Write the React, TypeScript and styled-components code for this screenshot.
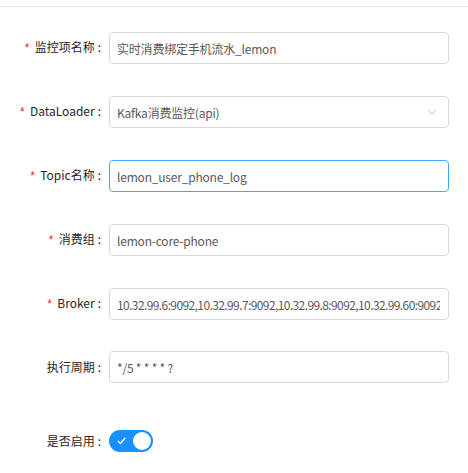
import React from "react";
import styled, { createGlobalStyle } from "styled-components";

const GlobalStyle = createGlobalStyle`
  html, body { margin: 0; padding: 0; background: #fff; }
  body { font-family: "Noto Sans CJK SC", "Noto Sans", sans-serif; font-size: 12px; }
`;

const Page = styled.div`
  width: 468px;
  height: 473px;
  overflow: hidden;
  background: #fff;
`;

const TopBar = styled.div`
  height: 6px;
  border-bottom: 1px solid #e8e8e8;
`;

const Form = styled.div`
  padding-top: 24px;
  display: flex;
  flex-direction: column;
`;

const Row = styled.div<{ $extraTop?: number }>`
  display: grid;
  grid-template-columns: 101px 340px;
  column-gap: 8px;
  align-items: center;
  height: 32px;
  margin-bottom: 32px;
  margin-top: ${(p) => p.$extraTop || 0}px;
`;

const Label = styled.label`
  text-align: right;
  color: #262626;
  font-size: 12px;
  white-space: nowrap;
  line-height: 32px;
`;

const Colon = styled.span`
  margin-left: 3px;
`;

const Star = styled.span`
  color: #f5222d;
  margin-right: 4px;
  font-family: "Liberation Mono", monospace;
  font-size: 12px;
`;

const Input = styled.div<{ $focused?: boolean }>`
  box-sizing: border-box;
  height: 32px;
  border: 1px solid ${(p) => (p.$focused ? "#40a9ff" : "#d9d9d9")};
  border-radius: 4px;
  padding: 0 8px 0 7px;
  display: flex;
  align-items: center;
  color: #595959;
  font-size: 12px;
  white-space: nowrap;
  overflow: hidden;
  position: relative;
`;

const Value = styled.span<{ $tight?: boolean }>`
  flex: 1;
  overflow: hidden;
  letter-spacing: ${(p) => (p.$tight ? "-0.6px" : "-0.2px")};
`;

const Arrow = styled.svg`
  position: absolute;
  right: 12px;
  top: 13px;
`;

const SwitchTrack = styled.div`
  width: 44px;
  height: 22px;
  border-radius: 11px;
  background: #1890ff;
  position: relative;
`;

const Knob = styled.div`
  position: absolute;
  top: 2px;
  right: 2px;
  width: 18px;
  height: 18px;
  border-radius: 50%;
  background: #fff;
`;

const Check = styled.svg`
  position: absolute;
  left: 8px;
  top: 7px;
`;

type Field = {
  label: string;
  required?: boolean;
  value: string;
  focused?: boolean;
  select?: boolean;
  tight?: boolean;
};

const fields: Field[] = [
  { label: "监控项名称", required: true, value: "实时消费绑定手机流水_lemon" },
  { label: "DataLoader", required: true, value: "Kafka消费监控(api)", select: true },
  { label: "Topic名称", required: true, value: "lemon_user_phone_log", focused: true },
  { label: "消费组", required: true, value: "lemon-core-phone" },
  {
    label: "Broker",
    required: true,
    value: "10.32.99.6:9092,10.32.99.7:9092,10.32.99.8:9092,10.32.99.60:9092",
    tight: true,
  },
  { label: "执行周期", value: "*/5 * * * * ?" },
];

export default function App() {
  return (
    <Page>
      <GlobalStyle />
      <TopBar />
      <Form>
        {fields.map((f) => (
          <Row key={f.label}>
            <Label>
              {f.required && <Star>*</Star>}
              {f.label}
              <Colon>:</Colon>
            </Label>
            <Input $focused={f.focused}>
              <Value $tight={f.tight}>{f.value}</Value>
              {f.select && (
                <Arrow width="8" height="5" viewBox="0 0 8 5">
                  <path d="M0.5 0.5 L4 4 L7.5 0.5" fill="none" stroke="#bfbfbf" strokeWidth="1" />
                </Arrow>
              )}
            </Input>
          </Row>
        ))}
        <Row $extraTop={10}>
          <Label>
            是否启用
            <Colon>:</Colon>
          </Label>
          <SwitchTrack>
            <Check width="9" height="8" viewBox="0 0 9 8">
              <path d="M1 4 L3.5 6.5 L8 1" fill="none" stroke="#fff" strokeWidth="1.4" />
            </Check>
            <Knob />
          </SwitchTrack>
        </Row>
      </Form>
    </Page>
  );
}
